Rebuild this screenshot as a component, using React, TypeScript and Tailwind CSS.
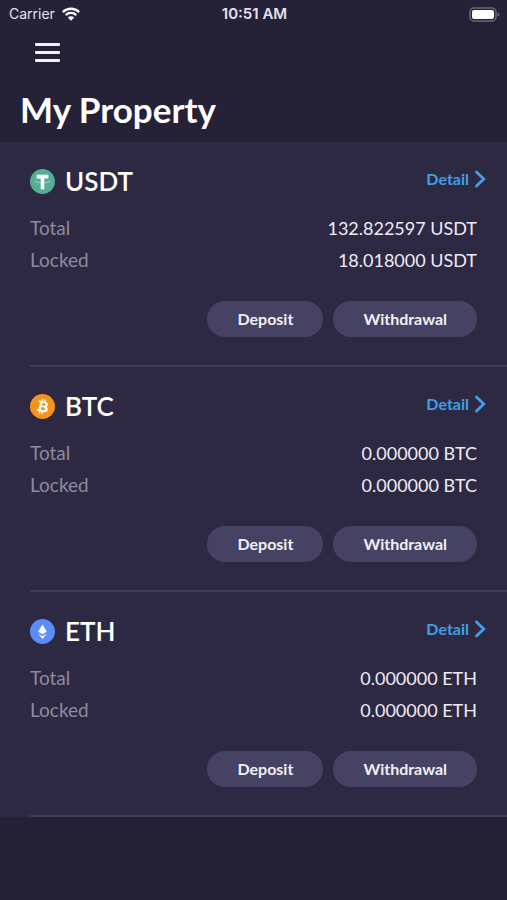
import React from "react";

interface Asset {
  symbol: string;
  total: string;
  locked: string;
  icon: React.ReactNode;
}

const UsdtIcon: React.FC = () => (
  <svg viewBox="0 0 32 32" className="h-[25px] w-[25px]" aria-hidden="true">
    <circle cx="16" cy="16" r="16" fill="#53ae94" />
    <path
      fill="none"
      stroke="#a9d6c9"
      strokeWidth="1.300"
      d="M6.500 15c1 2 4.500 2.800 9.500 2.800s8.500-.8 9.500-2.800"
    />
    <path fill="#fff" d="M8.500 7.500h15v4.500h-5.200v14h-4.600V12H8.500z" />
  </svg>
);

const BtcIcon: React.FC = () => (
  <svg viewBox="0 0 32 32" className="h-[25px] w-[25px]" aria-hidden="true">
    <circle cx="16" cy="16" r="16" fill="#f7931a" />
    <path
      fill="#fff"
      d="M23.189 14.020c.314-2.096-1.283-3.223-3.465-3.975l.708-2.840-1.728-.430-.690 2.765c-.454-.114-.920-.220-1.385-.326l.695-2.783L15.596 6l-.708 2.839c-.376-.086-.746-.170-1.104-.260l.002-.009-2.384-.595-.460 1.846s1.283.294 1.256.312c.700.175.826.638.805 1.006l-.806 3.235c.048.012.110.030.180.057l-.183-.045-1.130 4.532c-.086.212-.303.531-.793.410.018.025-1.256-.313-1.256-.313l-.858 1.978 2.250.561c.418.105.828.215 1.231.318l-.715 2.872 1.727.430.708-2.840c.472.127.930.245 1.378.357l-.706 2.828 1.728.430.715-2.866c2.948.558 5.164.333 6.097-2.333.752-2.146-.037-3.385-1.588-4.192 1.130-.260 1.980-1.003 2.207-2.538zm-3.950 5.538c-.533 2.147-4.148.986-5.320.695l.950-3.805c1.172.293 4.929.872 4.370 3.110zm.535-5.569c-.487 1.953-3.495.960-4.470.717l.860-3.450c.975.243 4.118.696 3.610 2.733z"
    />
  </svg>
);

const EthIcon: React.FC = () => (
  <svg viewBox="0 0 32 32" className="h-[25px] w-[25px]" aria-hidden="true">
    <circle cx="16" cy="16" r="16" fill="#5b8cf8" />
    <path fill="#fff" d="M16 7l-5.500 9.300L16 19.500l5.500-3.200z" />
    <path fill="#fff" d="M10.500 18.800L16 25.500l5.500-6.700L16 22z" />
  </svg>
);

const assets: Asset[] = [
  { symbol: "USDT", total: "132.822597", locked: "18.018000", icon: <UsdtIcon /> },
  { symbol: "BTC", total: "0.000000", locked: "0.000000", icon: <BtcIcon /> },
  { symbol: "ETH", total: "0.000000", locked: "0.000000", icon: <EthIcon /> },
];

const StatusBar: React.FC = () => (
  <div className="grid h-7 grid-cols-3 items-center pl-[9px] pr-[7px] font-['Inter',sans-serif] text-sm text-[#e4e2ea]">
    <div className="flex items-center gap-[7px]">
      <span>Carrier</span>
      <svg viewBox="0 0 18 14" className="h-[14px] w-[18px]" fill="none" stroke="#fff" aria-hidden="true">
        <path strokeWidth="2.300" d="M.8 5.100C5.300.6 12.700.6 17.200 5.100" />
        <path strokeWidth="2.300" d="M3.700 8.100c3-2.900 7.600-2.900 10.600 0" />
        <path fill="#fff" stroke="none" d="M9 13.800L5.800 10.500c1.800-1.700 4.600-1.700 6.400 0z" />
      </svg>
    </div>
    <span className="text-center text-[15px] font-semibold">10:51 AM</span>
    <svg viewBox="0 0 31 15" className="h-[15px] w-[31px] justify-self-end" aria-hidden="true">
      <rect x="1" y="1" width="26" height="13" rx="4" fill="none" stroke="#6b687a" strokeWidth="1.500" />
      <rect x="3" y="3" width="22" height="9" rx="2" fill="#fff" />
      <path d="M28.500 5.500v4c1.200-.4 2-1.100 2-2s-.8-1.600-2-2z" fill="#6b687a" />
    </svg>
  </div>
);

interface BalanceRowProps {
  label: string;
  value: string;
}

const BalanceRow: React.FC<BalanceRowProps> = ({ label, value }) => (
  <div className="flex justify-between leading-8">
    <dt className="text-[19px] text-[#8f8b9c]">{label}</dt>
    <dd className="text-[18px] text-[#eeecf4]">{value}</dd>
  </div>
);

const PillButton: React.FC<{ children: React.ReactNode }> = ({ children }) => (
  <button
    type="button"
    className="h-9 rounded-full bg-[#464263] px-[30px] text-base font-bold text-[#f0eff6]"
  >
    {children}
  </button>
);

const AssetCard: React.FC<{ asset: Asset }> = ({ asset }) => (
  <section className="pl-[30px] pt-5">
    <div className="border-b-2 border-[#423e50] pb-7">
      <div className="flex items-start justify-between pr-[21px]">
        <div className="flex h-[39px] items-center gap-[10px]">
          {asset.icon}
          <h2 className="text-[26px] font-semibold text-white">{asset.symbol}</h2>
        </div>
        <a href="#" className="flex h-[34px] items-center gap-[6px] text-base font-bold text-[#3f9fe8]">
          Detail
          <svg viewBox="0 0 11 18" className="h-[18px] w-[11px]" fill="none" stroke="currentColor" aria-hidden="true">
            <path strokeWidth="2.800" strokeLinecap="round" d="M1.500 2L8.800 9l-7.300 7" />
          </svg>
        </a>
      </div>
      <dl className="mt-[11px] pr-[30px]">
        <BalanceRow label="Total" value={`${asset.total} ${asset.symbol}`} />
        <BalanceRow label="Locked" value={`${asset.locked} ${asset.symbol}`} />
      </dl>
      <div className="mt-[25px] flex justify-end gap-[10px] pr-[30px]">
        <PillButton>Deposit</PillButton>
        <PillButton>Withdrawal</PillButton>
      </div>
    </div>
  </section>
);

const App: React.FC = () => {
  return (
    <div className="min-h-screen bg-[#252137] font-['Lato',sans-serif] text-white">
      <StatusBar />
      <header className="px-5">
        <button type="button" aria-label="Open menu" className="ml-[15px] flex h-12 items-center">
          <svg viewBox="0 0 25 19" className="h-[19px] w-[25px]" fill="#f3f1f8" aria-hidden="true">
            <rect width="25" height="3" rx="1" />
            <rect y="8" width="25" height="3" rx="1" />
            <rect y="16" width="25" height="3" rx="1" />
          </svg>
        </button>
        <h1 className="text-[35px] font-bold leading-[66px]">My Property</h1>
      </header>
      <main className="bg-[#2e2942]">
        {assets.map((asset) => (
          <AssetCard key={asset.symbol} asset={asset} />
        ))}
      </main>
    </div>
  );
};

export default App;
